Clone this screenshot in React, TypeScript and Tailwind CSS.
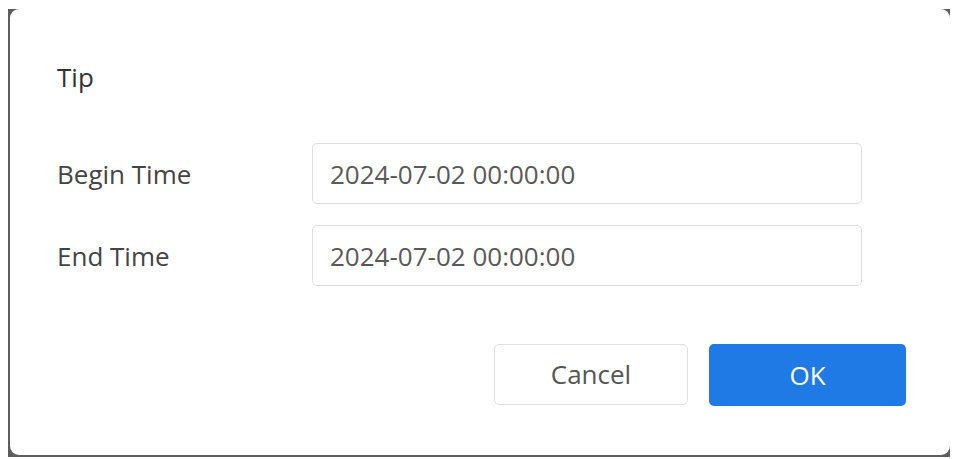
import React from 'react';

const rows = [
  { label: 'Begin Time', value: '2024-07-02 00:00:00' },
  { label: 'End Time', value: '2024-07-02 00:00:00' },
];

const App: React.FC = () => {
  return (
    <div className="w-[956px] h-[459px] bg-white overflow-hidden" style={{ fontFamily: '"Open Sans", "Noto Sans", sans-serif' }}>
      <div className="ml-[8px] mt-[9px] w-[942px] h-[448px] bg-[#5e5e5e] pl-[2px] pb-[2px]">
        <div className="h-full bg-white rounded-[9px] pl-[47px] pr-[44px] pt-[50px] flex flex-col">
          {/* Title */}
          <h2 className="text-[26px] leading-[36px] text-[#333]">Tip</h2>

          {/* Fields */}
          <div className="mt-[48px] flex flex-col gap-[21px]">
            {rows.map((r) => (
              <div key={r.label} className="flex items-center">
                <label className="w-[255px] text-[26px] leading-[36px] text-[#444]">{r.label}</label>
                <div className="w-[550px] h-[61px] border border-[#dedede] rounded-[5px] flex items-center pl-[17px] text-[26px] leading-[36px] text-[#595959]">
                  {r.value}
                </div>
              </div>
            ))}
          </div>

          {/* Actions */}
          <div className="mt-[58px] flex justify-end gap-[21px]">
            <button className="w-[194px] h-[61px] border border-[#e0e0e0] rounded-[5px] bg-white text-[26px] text-[#555]">
              Cancel
            </button>
            <button className="w-[197px] h-[62px] rounded-[5px] bg-[#1f7ae6] text-[26px] text-white">
              OK
            </button>
          </div>
        </div>
      </div>
    </div>
  );
};

export default App;
